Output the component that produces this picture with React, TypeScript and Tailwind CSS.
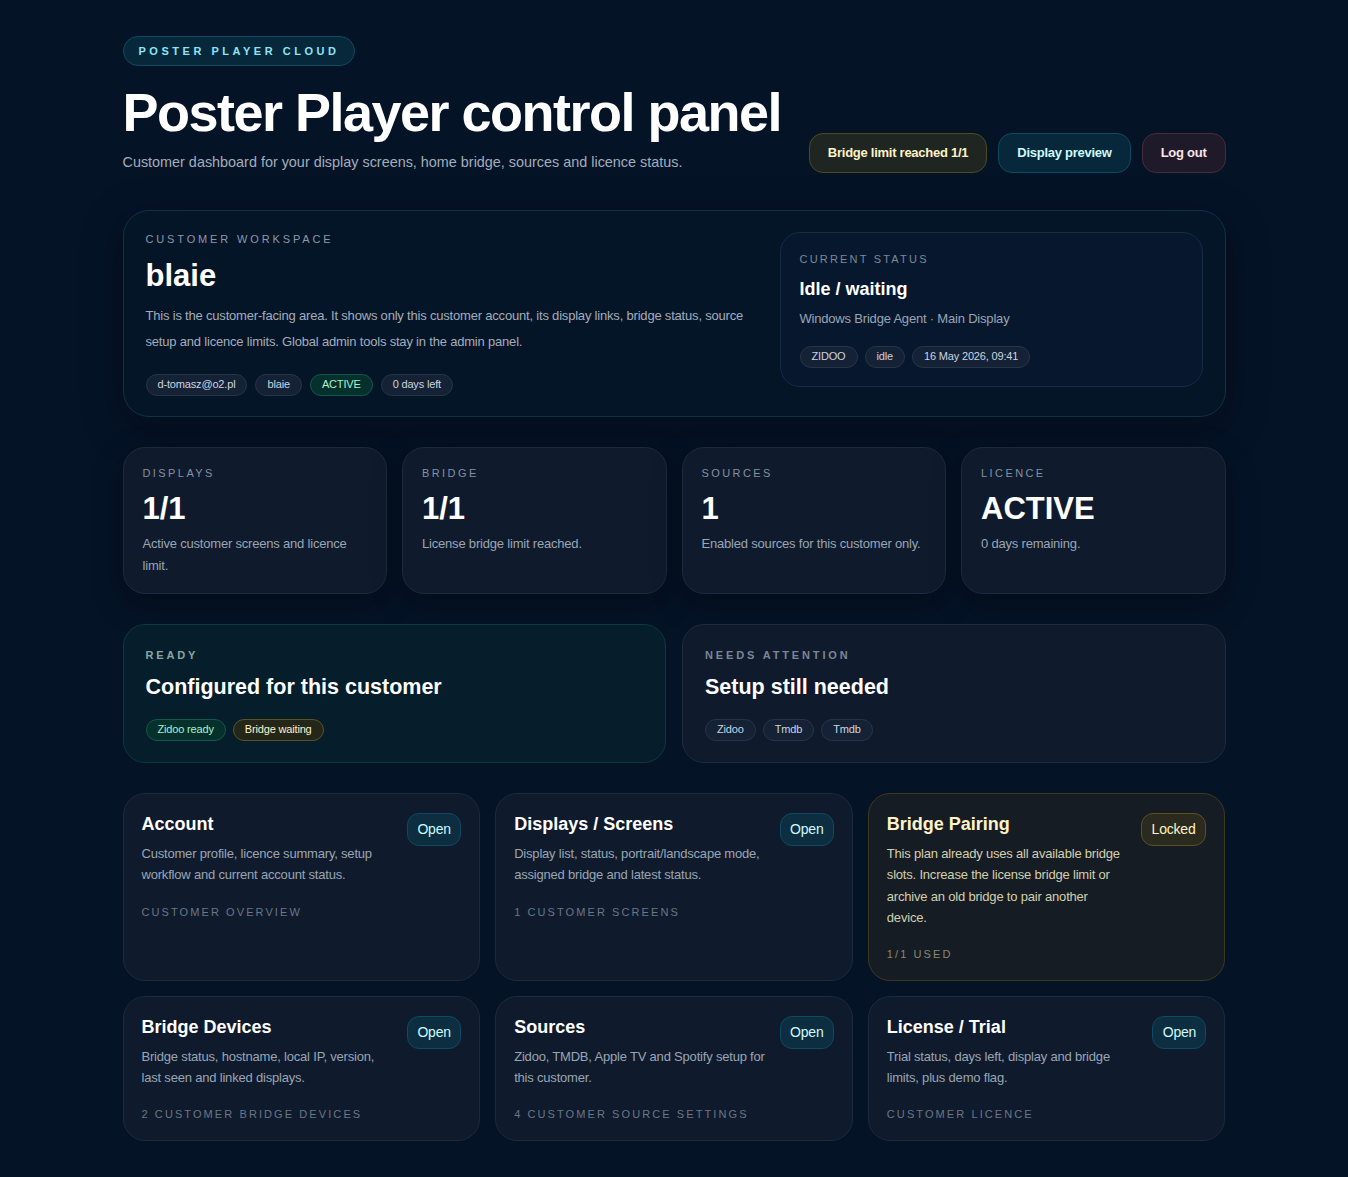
import React from "react";

type Tone = "neutral" | "green" | "amber";

function Chip({ children, tone = "neutral" }: { children: React.ReactNode; tone?: Tone }) {
  const cls =
    tone === "green"
      ? "border-[#0f5a4a] bg-[#06302c] text-[#a7f3d0]"
      : tone === "amber"
      ? "border-[#5c5420] bg-[#25261a] text-[#fef3c7]"
      : "border-[#26344a] bg-[#152236] text-[#cbd5e1]";
  return (
    <span className={`inline-flex h-[22px] items-center rounded-full border px-[11px] text-[11px] tracking-[-0.015em] ${cls}`}>
      {children}
    </span>
  );
}

function Label({ children, className = "" }: { children: React.ReactNode; className?: string }) {
  return <div className={`text-[11px] uppercase ${className}`}>{children}</div>;
}

function Stat({ label, value, desc }: { label: string; value: string; desc: string }) {
  return (
    <div className="h-[147px] rounded-[22px] border border-[#1c2a3d] bg-[#0f1b2d] px-[19px] pt-[17px] shadow-[0_10px_30px_rgba(0,0,0,0.35)]">
      <Label className="tracking-[0.22em] text-[#8390a2]">{label}</Label>
      <div className="mt-[9px] text-[31px] font-bold leading-[36px] text-white">{value}</div>
      <p className="mt-[6px] text-[13px] leading-[22px] tracking-[-0.015em] text-[#9aa5b4]">{desc}</p>
    </div>
  );
}

type Nav = { title: string; desc: string; foot: string; locked?: boolean };

function NavCard({ title, desc, foot, locked }: Nav) {
  return (
    <div
      className={`flex flex-col rounded-[22px] border px-[18px] pt-[19px] pb-[17px] ${
        locked ? "border-[#3d3a1c] bg-[#161c24]" : "border-[#1c2a3d] bg-[#0f1b2d]"
      }`}
    >
      <div className="flex items-start gap-[14px]">
        <div className="flex-1">
          <h3 className={`text-[18px] font-bold leading-[22px] ${locked ? "text-[#fef3c7]" : "text-white"}`}>{title}</h3>
          <p className={`mt-[8px] text-[13px] leading-[21.3px] tracking-[-0.015em] ${locked ? "text-[#d3d0ae]" : "text-[#9aa5b4]"}`}>
            {desc}
          </p>
        </div>
        <span
          className={`inline-flex h-[33px] shrink-0 items-center justify-center rounded-[12px] border text-[14px] tracking-[-0.015em] ${
            locked
              ? "border-[#5a5120] bg-[#2a2a1e] px-[10px] text-[#fef3c7]"
              : "w-[54px] border-[#0f4a5e] bg-[#0c2e40] text-[#cffafe]"
          }`}
        >
          {locked ? "Locked" : "Open"}
        </span>
      </div>
      <div className={`mt-[18px] text-[11px] uppercase tracking-[0.19em] ${locked ? "text-[#8a8870]" : "text-[#6b7686]"}`}>{foot}</div>
    </div>
  );
}

const navs: Nav[] = [
  { title: "Account", desc: "Customer profile, licence summary, setup workflow and current account status.", foot: "Customer overview" },
  { title: "Displays / Screens", desc: "Display list, status, portrait/landscape mode, assigned bridge and latest status.", foot: "1 customer screens" },
  {
    title: "Bridge Pairing",
    desc: "This plan already uses all available bridge slots. Increase the license bridge limit or archive an old bridge to pair another device.",
    foot: "1/1 used",
    locked: true,
  },
  { title: "Bridge Devices", desc: "Bridge status, hostname, local IP, version, last seen and linked displays.", foot: "2 customer bridge devices" },
  { title: "Sources", desc: "Zidoo, TMDB, Apple TV and Spotify setup for this customer.", foot: "4 customer source settings" },
  { title: "License / Trial", desc: "Trial status, days left, display and bridge limits, plus demo flag.", foot: "Customer licence" },
];

export default function App() {
  return (
    <div className="min-h-screen bg-[#051327] font-['Liberation_Sans',Arial,sans-serif] text-white">
      <div className="mx-auto w-[1103px] pt-[36px] pb-[37px]">
        {/* header */}
        <header className="flex items-end justify-between">
          <div>
            <span className="inline-flex h-[30px] items-center rounded-full border border-[#0f4a5e] bg-[#06283a] px-[15px] text-[11px] font-bold uppercase tracking-[0.32em] text-[#8fe3f7]">
              Poster Player Cloud
            </span>
            <h1 className="mt-[16px] text-[54px] font-bold leading-[60px] tracking-[-0.028em]">Poster Player control panel</h1>
            <p className="mt-[10px] text-[14.4px] leading-[20px] text-[#a3adbb]">
              Customer dashboard for your display screens, home bridge, sources and licence status.
            </p>
          </div>
          <div className="mb-[-1px] flex gap-[11px]">
            <span className="inline-flex h-[40px] items-center rounded-[14px] border border-[#4d4a1f] bg-[#1f2521] px-[18px] text-[13px] font-bold tracking-[-0.02em] text-[#fef3c7]">
              Bridge limit reached 1/1
            </span>
            <span className="inline-flex h-[40px] items-center rounded-[14px] border border-[#0f4a5e] bg-[#06283a] px-[18px] text-[13px] font-bold tracking-[-0.02em] text-[#cffafe]">
              Display preview
            </span>
            <span className="inline-flex h-[40px] items-center rounded-[14px] border border-[#4a2a3a] bg-[#1e1a2a] px-[18px] text-[13px] font-bold tracking-[-0.02em] text-[#ffe4e6]">
              Log out
            </span>
          </div>
        </header>

        {/* workspace */}
        <section className="mt-[38px] grid h-[207px] grid-cols-[1fr_423px] gap-[22px] rounded-[26px] border border-[#0d3346] bg-[#051528] pt-[21px] pr-[22px] pl-[22px] shadow-[0_10px_40px_rgba(0,0,0,0.35)]">
          <div>
            <Label className="-mt-px tracking-[0.26em] text-[#8a98a8]">Customer workspace</Label>
            <h2 className="mt-[8px] text-[31px] font-bold leading-[40px]">blaie</h2>
            <p className="mt-[7px] text-[13px] leading-[26px] tracking-[-0.015em] text-[#a3adbb]">
              This is the customer-facing area. It shows only this customer account, its display links, bridge status, source setup and licence limits. Global admin tools stay in the admin panel.
            </p>
            <div className="mt-[19px] flex gap-[8px]">
              <Chip>d-tomasz@o2.pl</Chip>
              <Chip>blaie</Chip>
              <Chip tone="green">ACTIVE</Chip>
              <Chip>0 days left</Chip>
            </div>
          </div>
          <div className="h-[155px] rounded-[20px] border border-[#142c44] bg-[#07182e] px-[19px] pt-[18px]">
            <Label className="tracking-[0.2em] text-[#7b8898]">Current status</Label>
            <div className="mt-[9px] text-[18px] font-bold leading-[24px]">Idle / waiting</div>
            <div className="mt-[9px] text-[13px] leading-[18px] tracking-[-0.015em] text-[#9aa5b4]">Windows Bridge Agent · Main Display</div>
            <div className="mt-[18px] flex gap-[7px]">
              <Chip>ZIDOO</Chip>
              <Chip>idle</Chip>
              <Chip>16 May 2026, 09:41</Chip>
            </div>
          </div>
        </section>

        {/* stats */}
        <section className="mt-[30px] grid grid-cols-4 gap-[15px]">
          <Stat label="Displays" value="1/1" desc="Active customer screens and licence limit." />
          <Stat label="Bridge" value="1/1" desc="License bridge limit reached." />
          <Stat label="Sources" value="1" desc="Enabled sources for this customer only." />
          <Stat label="Licence" value="ACTIVE" desc="0 days remaining." />
        </section>

        {/* ready / attention */}
        <section className="mt-[30px] grid grid-cols-2 gap-[16px]">
          <div className="h-[139px] rounded-[22px] border border-[#0b3a3c] bg-[#061d2b] px-[22px] pt-[22px]">
            <Label className="font-bold tracking-[0.26em] text-[#8aa6a6]">Ready</Label>
            <div className="mt-[10px] text-[21.5px] font-bold leading-[26px]">Configured for this customer</div>
            <div className="mt-[19px] flex gap-[7px]">
              <Chip tone="green">Zidoo ready</Chip>
              <Chip tone="amber">Bridge waiting</Chip>
            </div>
          </div>
          <div className="h-[139px] rounded-[22px] border border-[#1f2b3d] bg-[#0f1b2d] px-[22px] pt-[22px]">
            <Label className="font-bold tracking-[0.26em] text-[#7b8696]">Needs attention</Label>
            <div className="mt-[10px] text-[21.5px] font-bold leading-[26px]">Setup still needed</div>
            <div className="mt-[19px] flex gap-[7px]">
              <Chip>Zidoo</Chip>
              <Chip>Tmdb</Chip>
              <Chip>Tmdb</Chip>
            </div>
          </div>
        </section>

        {/* nav cards */}
        <section className="mt-[30px] grid grid-cols-3 gap-[15px]">
          {navs.map((n) => (
            <NavCard key={n.title} {...n} />
          ))}
        </section>
      </div>
    </div>
  );
}
